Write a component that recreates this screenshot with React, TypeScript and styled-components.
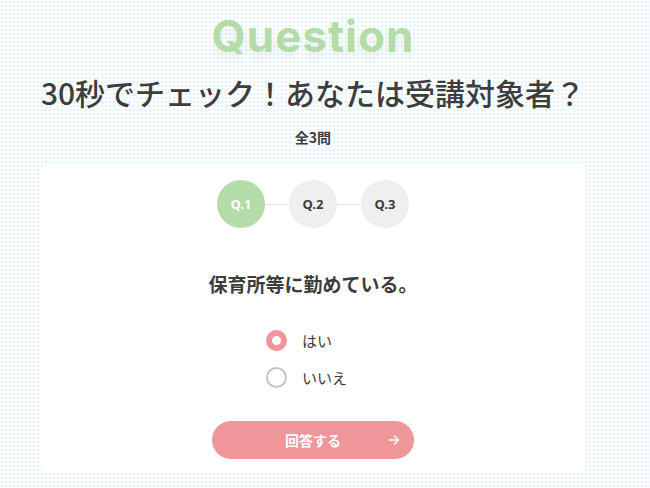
import React, { useState } from 'react'
import styled, { createGlobalStyle } from 'styled-components'

const GlobalStyle = createGlobalStyle`
  html, body {
    margin: 0;
    padding: 0;
  }
  body {
    min-height: 488px;
    background-color: #ffffff;
    background-image: radial-gradient(circle, #e0f5f7 0.9px, transparent 1.3px);
    background-size: 4px 4px;
    background-position: 0 0;
    font-family: 'Noto Sans CJK JP', 'Noto Sans', sans-serif;
    color: #3d3d3d;
  }
`

const Page = styled.main`
  width: 546px;
  margin-left: 40px;
  padding-top: 14px;
  display: flex;
  flex-direction: column;
  align-items: center;
`

const EnTitle = styled.div`
  font-family: Inter, 'Open Sans', sans-serif;
  font-weight: 700;
  font-size: 44px;
  line-height: 44px;
  letter-spacing: 1px;
  color: #b3dca8;
  text-shadow: 0 8px 10px rgba(0, 0, 0, 0.07);
`

const Heading = styled.h1`
  margin: 14px 0 0;
  font-size: 30px;
  line-height: 40px;
  font-weight: 500;
  color: #3d3d3d;
  white-space: nowrap;
`

const Count = styled.p`
  margin: 15px 0 0;
  font-size: 14px;
  line-height: 20px;
  font-weight: 700;
  color: #3d3d3d;
`

const Card = styled.section`
  margin-top: 17px;
  width: 100%;
  box-sizing: border-box;
  background: #ffffff;
  border-radius: 8px;
  box-shadow: 0 0 3px rgba(150, 190, 195, 0.2);
  padding: 16px 0 14px;
  display: flex;
  flex-direction: column;
  align-items: center;
`

const Steps = styled.ol`
  list-style: none;
  margin: 0;
  padding: 0;
  display: flex;
  align-items: center;
`

const StepLine = styled.span`
  width: 24px;
  height: 1px;
  background: #e4e4e4;
`

const Step = styled.li<{ $active?: boolean }>`
  width: 48px;
  height: 48px;
  border-radius: 50%;
  display: flex;
  align-items: center;
  justify-content: center;
  font-family: 'Noto Sans', 'Open Sans', sans-serif;
  font-size: 13px;
  font-weight: 700;
  background: ${({ $active }) => ($active ? '#b3dca8' : '#efefef')};
  color: ${({ $active }) => ($active ? '#ffffff' : '#3d3d3d')};
`

const QuestionText = styled.h2`
  margin: 42px 0 0;
  font-size: 19px;
  line-height: 28px;
  font-weight: 700;
  color: #3d3d3d;
`

const Choices = styled.div`
  margin-top: 30px;
  width: 94px;
  display: flex;
  flex-direction: column;
  gap: 13px;
`

const Choice = styled.label`
  display: flex;
  align-items: center;
  gap: 15px;
  height: 24px;
  font-size: 15px;
  color: #3d3d3d;
  cursor: pointer;
`

const RadioMark = styled.span<{ $checked: boolean }>`
  width: 21px;
  height: 21px;
  box-sizing: border-box;
  border-radius: 50%;
  background: #ffffff;
  border: ${({ $checked }) => ($checked ? '6px solid #f0959b' : '2px solid #c4c4c4')};
`

const HiddenInput = styled.input`
  display: none;
`

const SubmitButton = styled.button`
  margin-top: 32px;
  width: 202px;
  height: 38px;
  border: none;
  border-radius: 19px;
  background: #f0969b;
  color: #ffffff;
  font-family: inherit;
  font-size: 14px;
  font-weight: 700;
  padding: 0 14px;
  display: grid;
  grid-template-columns: 1fr auto 1fr;
  align-items: center;
  cursor: pointer;
`

const ArrowIcon = styled.svg`
  justify-self: end;
  width: 12px;
  height: 12px;
`

const steps = ['Q.1', 'Q.2', 'Q.3']
const options = ['はい', 'いいえ']

export default function App() {
  const [answer, setAnswer] = useState('はい')

  return (
    <>
      <GlobalStyle />
      <Page>
        <EnTitle>Question</EnTitle>
        <Heading>30秒でチェック！あなたは受講対象者？</Heading>
        <Count>全3問</Count>
        <Card>
          <Steps>
            {steps.map((s, i) => (
              <React.Fragment key={s}>
                {i > 0 && <StepLine />}
                <Step $active={i === 0}>{s}</Step>
              </React.Fragment>
            ))}
          </Steps>
          <QuestionText>保育所等に勤めている。</QuestionText>
          <Choices>
            {options.map((o) => (
              <Choice key={o}>
                <HiddenInput
                  type="radio"
                  name="q1"
                  checked={answer === o}
                  onChange={() => setAnswer(o)}
                />
                <RadioMark $checked={answer === o} />
                {o}
              </Choice>
            ))}
          </Choices>
          <SubmitButton>
            <span />
            <span>回答する</span>
            <ArrowIcon viewBox="0 0 12 12" fill="none" stroke="#fff" strokeWidth="1.6" strokeLinecap="round" strokeLinejoin="round">
              <path d="M1.5 6h9M6.5 2l4 4-4 4" />
            </ArrowIcon>
          </SubmitButton>
        </Card>
      </Page>
    </>
  )
}
